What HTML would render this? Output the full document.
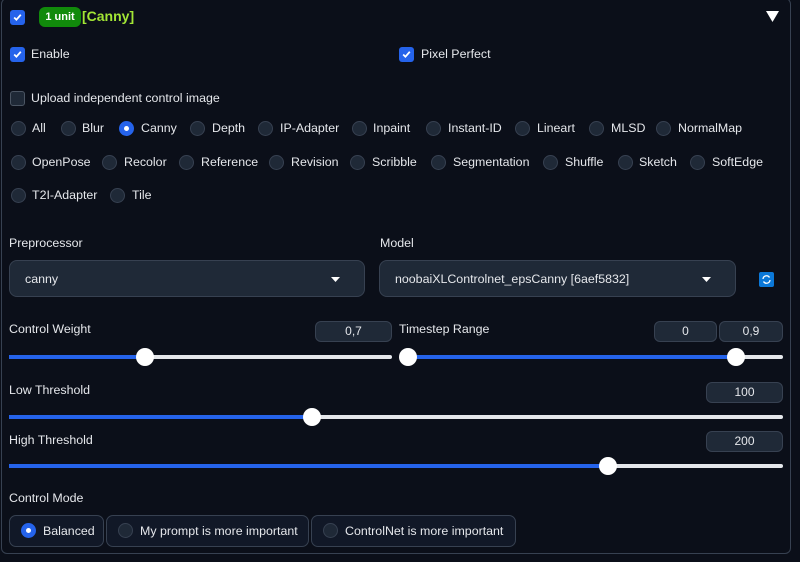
<!DOCTYPE html><html><head><style>
*{box-sizing:border-box;margin:0;padding:0}
body{width:800px;height:562px;background:#0b0f19;font-family:"Liberation Sans",sans-serif;font-size:12.4px;color:#e5e7eb;position:relative;overflow:hidden}
.a{position:absolute;white-space:nowrap}
.panel{position:absolute;left:1px;top:-2px;width:790px;height:556px;border:1px solid #374151;border-radius:6px}
.cb{position:absolute;width:15px;height:15px;border-radius:3px;background:#2563eb}
.cb.off{background:#1f2937;border:1px solid #4b5563}
.cb svg{position:absolute;left:2px;top:2px}
.r{position:absolute;width:15px;height:15px;border-radius:50%;background:#1f2937;border:1px solid #374151}
.r.on{background:#2563eb;border:none}
.r.on::after{content:"";position:absolute;left:5px;top:5px;width:5px;height:5px;border-radius:50%;background:#fff}
.dd{position:absolute;background:#1f2937;border:1px solid #374151;border-radius:8px;height:37px}
.num{position:absolute;background:#1f2937;border:1px solid #374151;border-radius:6px;height:21px;text-align:center;line-height:19px;font-size:12px}
.tr{position:absolute;height:4px;background:#e5e7eb;border-radius:2px}
.fill{position:absolute;height:4px;background:#2563eb}
.th{position:absolute;width:18px;height:18px;border-radius:50%;background:#fff}
.btn{position:absolute;top:515px;height:32px;background:#111827;border:1px solid #374151;border-radius:7px}
</style></head><body>
<div class="panel"></div>
<div class="cb" style="left:10px;top:10px"><svg width="11" height="11" viewBox="0 0 10 10"><path d="M2 5l2 2 4-4.5" stroke="#fff" stroke-width="1.6" fill="none"/></svg></div>
<div class="a" style="left:39px;top:7px;width:42px;height:20px;background:#118a0b;border-radius:6px;color:#fff;font-size:11px;font-weight:bold;text-align:center;line-height:20px">1 unit</div>
<div class="a" style="left:82px;top:8px;color:#a3e635;font-size:14px;font-weight:bold">[Canny]</div>
<svg class="a" style="left:766px;top:11px" width="13" height="11"><path d="M0 0h13L6.5 11z" fill="#fff"/></svg>
<div class="cb" style="left:10px;top:47px"><svg width="11" height="11" viewBox="0 0 10 10"><path d="M2 5l2 2 4-4.5" stroke="#fff" stroke-width="1.6" fill="none"/></svg></div>
<div class="a" style="left:31px;top:47px">Enable</div>
<div class="cb" style="left:399px;top:47px"><svg width="11" height="11" viewBox="0 0 10 10"><path d="M2 5l2 2 4-4.5" stroke="#fff" stroke-width="1.6" fill="none"/></svg></div>
<div class="a" style="left:421px;top:47px">Pixel Perfect</div>
<div class="cb off" style="left:10px;top:91px"></div>
<div class="a" style="left:31px;top:91px">Upload independent control image</div>

<div class="r" style="left:11px;top:121px"></div><div class="a" style="left:32px;top:121px">All</div>
<div class="r" style="left:61px;top:121px"></div><div class="a" style="left:82px;top:121px">Blur</div>
<div class="r on" style="left:119px;top:121px"></div><div class="a" style="left:141px;top:121px">Canny</div>
<div class="r" style="left:190px;top:121px"></div><div class="a" style="left:212px;top:121px">Depth</div>
<div class="r" style="left:258px;top:121px"></div><div class="a" style="left:280px;top:121px">IP-Adapter</div>
<div class="r" style="left:352px;top:121px"></div><div class="a" style="left:373px;top:121px">Inpaint</div>
<div class="r" style="left:426px;top:121px"></div><div class="a" style="left:448px;top:121px">Instant-ID</div>
<div class="r" style="left:515px;top:121px"></div><div class="a" style="left:537px;top:121px">Lineart</div>
<div class="r" style="left:589px;top:121px"></div><div class="a" style="left:611px;top:121px">MLSD</div>
<div class="r" style="left:656px;top:121px"></div><div class="a" style="left:678px;top:121px">NormalMap</div>

<div class="r" style="left:11px;top:155px"></div><div class="a" style="left:32px;top:155px">OpenPose</div>
<div class="r" style="left:102px;top:155px"></div><div class="a" style="left:124px;top:155px">Recolor</div>
<div class="r" style="left:179px;top:155px"></div><div class="a" style="left:201px;top:155px">Reference</div>
<div class="r" style="left:269px;top:155px"></div><div class="a" style="left:291px;top:155px">Revision</div>
<div class="r" style="left:350px;top:155px"></div><div class="a" style="left:372px;top:155px">Scribble</div>
<div class="r" style="left:431px;top:155px"></div><div class="a" style="left:453px;top:155px">Segmentation</div>
<div class="r" style="left:543px;top:155px"></div><div class="a" style="left:565px;top:155px">Shuffle</div>
<div class="r" style="left:618px;top:155px"></div><div class="a" style="left:639px;top:155px">Sketch</div>
<div class="r" style="left:690px;top:155px"></div><div class="a" style="left:712px;top:155px">SoftEdge</div>

<div class="r" style="left:11px;top:188px"></div><div class="a" style="left:32px;top:188px">T2I-Adapter</div>
<div class="r" style="left:110px;top:188px"></div><div class="a" style="left:132px;top:188px">Tile</div>

<div class="a" style="left:9px;top:236px">Preprocessor</div>
<div class="dd" style="left:9px;top:260px;width:356px"></div>
<div class="a" style="left:25px;top:272px">canny</div>
<svg class="a" style="left:331px;top:277px" width="9" height="5"><path d="M0 0h9L4.5 5z" fill="#fff"/></svg>
<div class="a" style="left:380px;top:236px">Model</div>
<div class="dd" style="left:379px;top:260px;width:357px"></div>
<div class="a" style="left:395px;top:272px">noobaiXLControlnet_epsCanny [6aef5832]</div>
<svg class="a" style="left:702px;top:277px" width="9" height="5"><path d="M0 0h9L4.5 5z" fill="#fff"/></svg>
<div class="a" style="left:759px;top:272px;width:15px;height:15px;background:#0b78d8;border-radius:2px"></div>
<svg class="a" style="left:761px;top:274px" width="11" height="11" viewBox="0 0 11 11"><path d="M2 5a3.5 3.5 0 0 1 6.5-1.5M9 6a3.5 3.5 0 0 1-6.5 1.5" stroke="#fff" stroke-width="1.3" fill="none"/></svg>

<div class="a" style="left:9px;top:322px">Control Weight</div>
<div class="num" style="left:315px;top:321px;width:77px">0,7</div>
<div class="tr" style="left:9px;top:355px;width:383px"></div><div class="fill" style="left:9px;top:355px;width:136px"></div>
<div class="th" style="left:136px;top:348px"></div>
<div class="a" style="left:399px;top:322px">Timestep Range</div>
<div class="num" style="left:654px;top:321px;width:63px">0</div>
<div class="num" style="left:719px;top:321px;width:64px">0,9</div>
<div class="tr" style="left:400px;top:355px;width:383px"></div><div class="fill" style="left:408px;top:355px;width:328px"></div>
<div class="th" style="left:399px;top:348px"></div><div class="th" style="left:727px;top:348px"></div>

<div class="a" style="left:9px;top:383px">Low Threshold</div>
<div class="num" style="left:706px;top:382px;width:77px">100</div>
<div class="tr" style="left:9px;top:415px;width:774px"></div><div class="fill" style="left:9px;top:415px;width:303px"></div>
<div class="th" style="left:303px;top:408px"></div>
<div class="a" style="left:9px;top:433px">High Threshold</div>
<div class="num" style="left:706px;top:431px;width:77px">200</div>
<div class="tr" style="left:9px;top:464px;width:774px"></div><div class="fill" style="left:9px;top:464px;width:599px"></div>
<div class="th" style="left:599px;top:457px"></div>

<div class="a" style="left:9px;top:491px">Control Mode</div>
<div class="btn" style="left:9px;width:95px"></div>
<div class="r on" style="left:21px;top:523px"></div><div class="a" style="left:43px;top:524px">Balanced</div>
<div class="btn" style="left:106px;width:203px"></div>
<div class="r" style="left:118px;top:523px"></div><div class="a" style="left:140px;top:524px">My prompt is more important</div>
<div class="btn" style="left:311px;width:205px"></div>
<div class="r" style="left:323px;top:523px"></div><div class="a" style="left:345px;top:524px">ControlNet is more important</div>
</body></html>
